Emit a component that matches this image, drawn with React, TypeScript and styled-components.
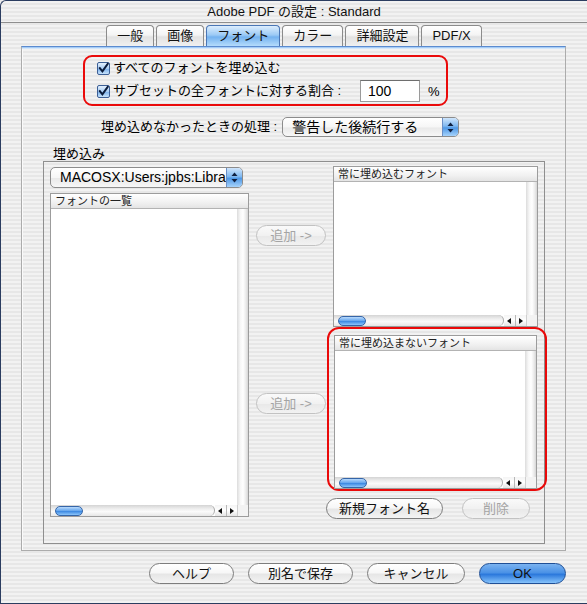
import React from "react";
import styled, { createGlobalStyle, css } from "styled-components";

const FONT = `"Liberation Sans", "Noto Sans CJK JP", sans-serif`;

const GlobalStyle = createGlobalStyle`
  html, body { margin: 0; padding: 0; background: #ececec; }
  body { font-family: ${FONT}; font-size: 13px; color: #000; }
  * { box-sizing: border-box; }
`;

const stripes = `repeating-linear-gradient(to bottom, #f2f2f2 0px, #f2f2f2 2px, #e7e7e7 2px, #e7e7e7 4px)`;

const Window = styled.div`
  width: 587px;
  height: 604px;
  background: ${stripes};
  border-top: 1px solid #2b3d60;
  border-left: 1px solid #2b3d60;
  border-bottom: 1px solid #2b3d60;
  border-top-left-radius: 6px;
  display: flex;
  flex-direction: column;
  overflow: hidden;
`;

const TitleBar = styled.div`
  height: 22px;
  border-bottom: 1px solid #8e8e8e;
  display: flex;
  align-items: center;
  justify-content: center;
  font-size: 13px;
  line-height: 21px;
  color: #111;
`;

const TabRow = styled.div`
  display: flex;
  justify-content: center;
  gap: 2px;
  margin-top: 2px;
  height: 21px;
`;

const Tab = styled.div<{ $active?: boolean }>`
  height: 21px;
  padding: 0 10px;
  border: 1px solid #8b8b8b;
  border-bottom: none;
  border-radius: 4px 4px 0 0;
  font-size: 13px;
  line-height: 20px;
  color: #111;
  background: linear-gradient(to bottom, #ffffff 0%, #f4f4f4 45%, #e2e2e2 55%, #f0f0f0 100%);
  ${(p) =>
    p.$active &&
    css`
      border-color: #4a76b5;
      background: linear-gradient(to bottom, #dcedfd 0%, #9ccaf5 45%, #74b2ef 55%, #b4dbfc 100%);
    `}
`;

const Panel = styled.div`
  margin-left: 20px;
  width: 545px;
  height: 505px;
  border: 1px solid #acacac;
  border-top: 1px solid #5b8bd0;
  box-shadow: inset 0 1px 0 #a6ccf5, inset 0 2px 0 #d4e7fb, inset 1px 0 0 #fafafa;
  display: flex;
  flex-direction: column;
  align-items: flex-start;
`;

const CheckGroup = styled.div`
  margin: 8px 0 0 61px;
  width: 365px;
  height: 51px;
  border: 2px solid #ea0a0a;
  border-radius: 9px;
  padding: 2px 6px 0 12px;
  display: flex;
  flex-direction: column;
  gap: 3px;
`;

const CheckRow = styled.div<{ $h: number }>`
  display: flex;
  align-items: center;
  height: ${(p) => p.$h}px;
`;

const CheckBox = styled.span`
  width: 13px;
  height: 13px;
  border: 1px solid #3c5f96;
  border-radius: 2px;
  background: linear-gradient(to bottom, #e3f0fd 0%, #a9cdf4 50%, #7fb3ec 55%, #c6e2fb 100%);
  display: flex;
  align-items: center;
  justify-content: center;
  flex: none;
`;

const Label = styled.span`
  font-size: 13px;
  line-height: 16px;
  white-space: nowrap;
  margin-left: 3px;
`;

const TextInput = styled.div`
  margin-left: auto;
  width: 60px;
  height: 22px;
  border: 1px solid #9a9a9a;
  border-top-color: #6e6e6e;
  background: #fff;
  font-size: 14px;
  line-height: 20px;
  padding-left: 7px;
`;

const Unit = styled.span`
  margin-left: 8px;
  width: 12px;
  font-size: 13px;
`;

const PopupRow = styled.div`
  margin: 11px 0 0 76px;
  display: flex;
  align-items: center;
  height: 20px;
  gap: 5px;
`;

const Popup = styled.div<{ $w: number; $h: number }>`
  width: ${(p) => p.$w}px;
  height: ${(p) => p.$h}px;
  border: 1px solid #8c8c8c;
  border-radius: 5px;
  background: linear-gradient(to bottom, #ffffff 0%, #f6f6f6 50%, #e9e9e9 55%, #f7f7f7 100%);
  display: flex;
  align-items: stretch;
  overflow: hidden;
  flex: none;
`;

const PopupText = styled.span`
  flex: 1;
  min-width: 0;
  padding-left: 9px;
  font-size: 14px;
  line-height: 19px;
  white-space: nowrap;
  overflow: hidden;
`;

const PopupCap = styled.span`
  width: 16px;
  flex: none;
  border-left: 1px solid #6a8fc6;
  background: linear-gradient(to bottom, #cfe5fc 0%, #7fb8f0 45%, #4f98e6 55%, #a6d3fb 100%);
  display: flex;
  align-items: center;
  justify-content: center;
`;

const GroupLabel = styled.div`
  margin: 9px 0 0 31px;
  font-size: 13px;
  line-height: 15px;
`;

const GroupBox = styled.div`
  margin-left: 21px;
  width: 502px;
  height: 383px;
  border: 1px solid #8f8f8f;
  display: grid;
  grid-template-columns: 199px 84px 205px;
  padding: 4px 6px 0;
  align-items: start;
`;

const LeftCol = styled.div`
  margin-top: 1px;
  display: flex;
  flex-direction: column;
  gap: 5px;
`;

const MidCol = styled.div`
  padding: 59px 0 0 7px;
  display: flex;
  flex-direction: column;
  gap: 147px;
`;

const RightCol = styled.div`
  display: flex;
  flex-direction: column;
`;

const ListBox = styled.div<{ $w: number; $h: number }>`
  width: ${(p) => p.$w}px;
  height: ${(p) => p.$h}px;
  border: 1px solid #9c9c9c;
  display: grid;
  grid-template-columns: 1fr 11px;
  grid-template-rows: 15px 1fr 11px;
  background: #fff;
`;

const ListHeader = styled.div`
  grid-column: 1 / 3;
  background: linear-gradient(to bottom, #ffffff 0%, #f1f1f1 60%, #e4e4e4 100%);
  border-bottom: 1px solid #b3b3b3;
  font-size: 11px;
  line-height: 14px;
  padding-left: 4px;
  color: #222;
  white-space: nowrap;
`;

const ListBody = styled.div`
  background: #fff;
`;

const VTrack = styled.div`
  background: linear-gradient(to right, #dcdcdc 0%, #f7f7f7 30%, #ffffff 55%, #ececec 80%, #d6d6d6 100%);
`;

const HScroll = styled.div`
  display: flex;
  height: 11px;
`;

const HTrack = styled.div`
  flex: 1;
  display: flex;
  align-items: center;
  border-radius: 0 6px 6px 0;
  border-right: 1px solid #a8a8a8;
  background: linear-gradient(to bottom, #d4d4d4 0%, #eeeeee 35%, #fbfbfb 60%, #e6e6e6 100%);
`;

const Thumb = styled.span`
  margin-left: 4px;
  width: 28px;
  height: 10px;
  border-radius: 5px;
  border: 1px solid #3565a8;
  background: linear-gradient(to bottom, #b9dafc 0%, #6aa9ee 45%, #3f8ae2 55%, #8cc6fb 100%);
`;

const Arrows = styled.div`
  width: 22px;
  display: flex;
  background: linear-gradient(to bottom, #f4f4f4 0%, #ffffff 50%, #e4e4e4 100%);
`;

const ArrowCell = styled.span`
  flex: 1;
  display: flex;
  align-items: center;
  justify-content: center;
  & + & {
    border-left: 1px solid #b8b8b8;
  }
`;

const Corner = styled.div`
  background: #f3f3f3;
  border-left: 1px solid #cfcfcf;
`;

const AquaButton = styled.div<{ $w: number; $primary?: boolean; $disabled?: boolean }>`
  width: ${(p) => p.$w}px;
  height: 21px;
  border-radius: 11px;
  border: 1px solid #7d7d7d;
  background: linear-gradient(to bottom, #ffffff 0%, #f7f7f7 45%, #e6e6e6 55%, #f4f4f4 100%);
  font-size: 13px;
  line-height: 19px;
  text-align: center;
  white-space: nowrap;
  color: #111;
  flex: none;
  ${(p) =>
    p.$disabled &&
    css`
      border-color: #c2c2c2;
      color: #a4a4a4;
      background: linear-gradient(to bottom, #fafafa 0%, #f1f1f1 50%, #e9e9e9 55%, #f2f2f2 100%);
    `}
  ${(p) =>
    p.$primary &&
    css`
      border-color: #1f4f96;
      background: linear-gradient(to bottom, #7bb3f0 0%, #4b92e6 45%, #2c79dc 55%, #86c3fb 100%);
    `}
`;

const RedMark = styled.div`
  margin: 0 -9px 0 -6px;
  border: 2px solid #ea0a0a;
  border-radius: 12px;
  padding: 6px 8px 0 5px;
`;

const SmallButtons = styled.div`
  margin: 7px 0 0 -7px;
  display: flex;
  gap: 19px;
`;

const BottomRow = styled.div`
  margin-top: 12px;
  display: flex;
  justify-content: flex-end;
  gap: 14px;
  padding-right: 21px;
`;

const CheckIcon = () => (
  <svg width="12" height="12" viewBox="0 0 12 12">
    <path d="M2 6.2 L4.8 9.6 L10.6 1.4" fill="none" stroke="#0b1c3c" strokeWidth="2.2" strokeLinecap="square" />
  </svg>
);

const UpDown = () => (
  <svg width="7" height="11" viewBox="0 0 7 11">
    <path d="M3.5 0.5 L6.5 4 L0.5 4 Z" fill="#102040" />
    <path d="M3.5 10.5 L6.5 7 L0.5 7 Z" fill="#102040" />
  </svg>
);

const Tri = ({ dir }: { dir: "l" | "r" }) => (
  <svg width="4" height="6" viewBox="0 0 4 6">
    {dir === "l" ? <path d="M0 3 L4 0 L4 6 Z" fill="#111" /> : <path d="M4 3 L0 0 L0 6 Z" fill="#111" />}
  </svg>
);

const FontList = ({ title, w, h }: { title: string; w: number; h: number }) => (
  <ListBox $w={w} $h={h}>
    <ListHeader>{title}</ListHeader>
    <ListBody />
    <VTrack />
    <HScroll>
      <HTrack>
        <Thumb />
      </HTrack>
      <Arrows>
        <ArrowCell>
          <Tri dir="l" />
        </ArrowCell>
        <ArrowCell>
          <Tri dir="r" />
        </ArrowCell>
      </Arrows>
    </HScroll>
    <Corner />
  </ListBox>
);

const tabs = ["一般", "画像", "フォント", "カラー", "詳細設定", "PDF/X"];

export default function App() {
  return (
    <>
      <GlobalStyle />
      <Window>
        <TitleBar>Adobe PDF の設定 : Standard</TitleBar>
        <TabRow>
          {tabs.map((t) => (
            <Tab key={t} $active={t === "フォント"}>
              {t}
            </Tab>
          ))}
        </TabRow>
        <Panel>
          <CheckGroup>
            <CheckRow $h={18}>
              <CheckBox>
                <CheckIcon />
              </CheckBox>
              <Label>すべてのフォントを埋め込む</Label>
            </CheckRow>
            <CheckRow $h={22}>
              <CheckBox>
                <CheckIcon />
              </CheckBox>
              <Label>サブセットの全フォントに対する割合 :</Label>
              <TextInput>100</TextInput>
              <Unit>%</Unit>
            </CheckRow>
          </CheckGroup>
          <PopupRow>
            <Label>埋め込めなかったときの処理 :</Label>
            <Popup $w={177} $h={20}>
              <PopupText>警告した後続行する</PopupText>
              <PopupCap>
                <UpDown />
              </PopupCap>
            </Popup>
          </PopupRow>
          <GroupLabel>埋め込み</GroupLabel>
          <GroupBox>
            <LeftCol>
              <Popup $w={193} $h={21}>
                <PopupText>MACOSX:Users:jpbs:Library</PopupText>
                <PopupCap>
                  <UpDown />
                </PopupCap>
              </Popup>
              <FontList title="フォントの一覧" w={199} h={324} />
            </LeftCol>
            <MidCol>
              <AquaButton $w={70} $disabled>
                追加 -&gt;
              </AquaButton>
              <AquaButton $w={70} $disabled>
                追加 -&gt;
              </AquaButton>
            </MidCol>
            <RightCol>
              <FontList title="常に埋め込むフォント" w={205} h={161} />
              <RedMark>
                <FontList title="常に埋め込まないフォント" w={203} h={154} />
              </RedMark>
              <SmallButtons>
                <AquaButton $w={117}>新規フォント名</AquaButton>
                <AquaButton $w={68} $disabled>
                  削除
                </AquaButton>
              </SmallButtons>
            </RightCol>
          </GroupBox>
        </Panel>
        <BottomRow>
          <AquaButton $w={85}>ヘルプ</AquaButton>
          <AquaButton $w={105}>別名で保存</AquaButton>
          <AquaButton $w={98}>キャンセル</AquaButton>
          <AquaButton $w={87} $primary>
            OK
          </AquaButton>
        </BottomRow>
      </Window>
    </>
  );
}
